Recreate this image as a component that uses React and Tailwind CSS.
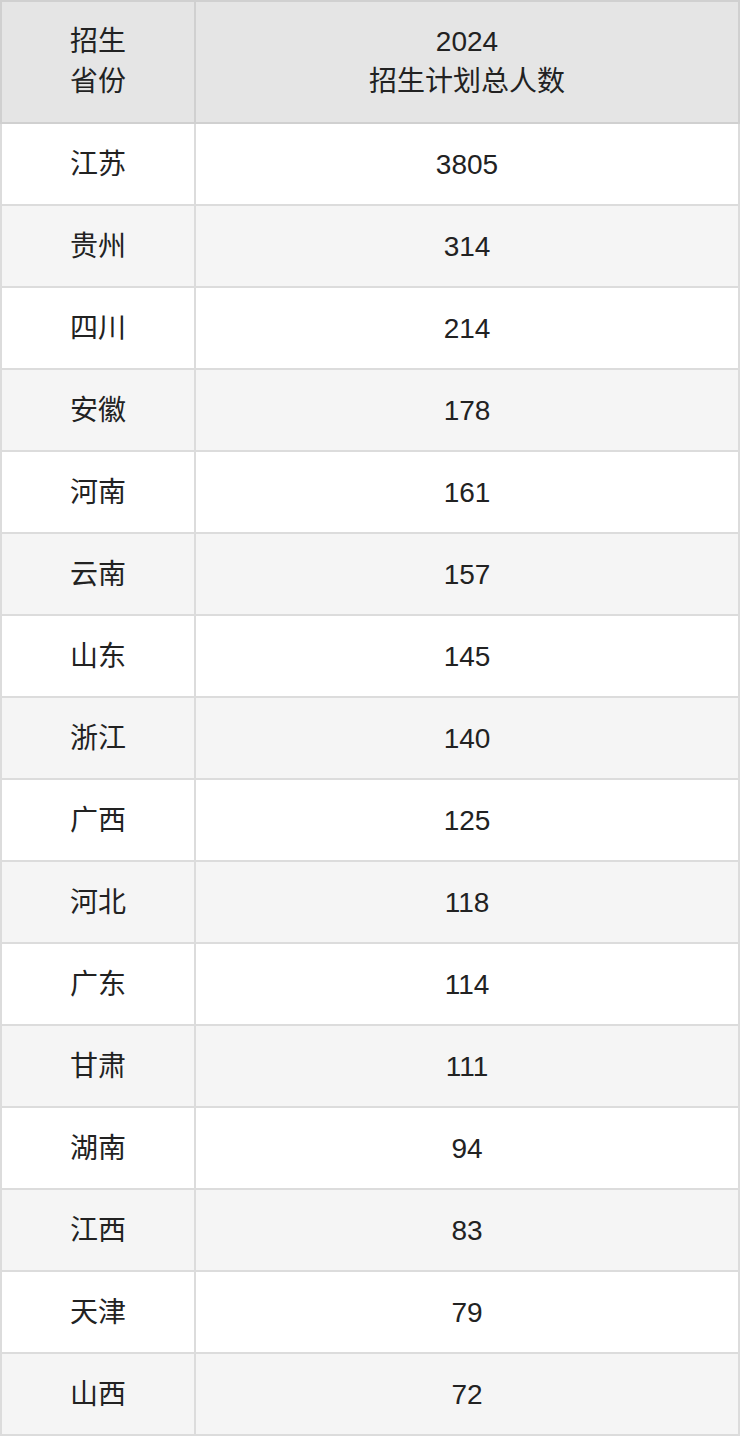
import React from 'react';

const rows = [
    ['江苏', '3805'],
    ['贵州', '314'],
    ['四川', '214'],
    ['安徽', '178'],
    ['河南', '161'],
    ['云南', '157'],
    ['山东', '145'],
    ['浙江', '140'],
    ['广西', '125'],
    ['河北', '118'],
    ['广东', '114'],
    ['甘肃', '111'],
    ['湖南', '94'],
    ['江西', '83'],
    ['天津', '79'],
    ['山西', '72'],
];

export default function App() {
    return (
        <div
            className="w-[740px] bg-white text-[#222] text-[28px] leading-[40px]"
            style={{ fontFamily: '"Liberation Sans", "Noto Sans CJK SC", sans-serif' }}
        >
            <table className="w-full border-collapse table-fixed">
                <thead>
                    <tr className="bg-[#e5e5e5]">
                        <th className="w-[194px] h-[122px] border-2 border-[#d0d0d0] font-normal text-center align-middle">
                            招生<br />省份
                        </th>
                        <th className="border-2 border-[#d0d0d0] font-normal text-center align-middle">
                            2024<br />招生计划总人数
                        </th>
                    </tr>
                </thead>
                <tbody>
                    {rows.map(([province, total], index) => (
                        <tr key={province} className={index % 2 === 1 ? 'bg-[#f5f5f5]' : 'bg-white'}>
                            <td className="h-[82px] pt-[2px] border-2 border-[#dcdcdc] text-center align-middle">{province}</td>
                            <td className="pt-[2px] border-2 border-[#dcdcdc] text-center align-middle">{total}</td>
                        </tr>
                    ))}
                </tbody>
            </table>
        </div>
    );
}
